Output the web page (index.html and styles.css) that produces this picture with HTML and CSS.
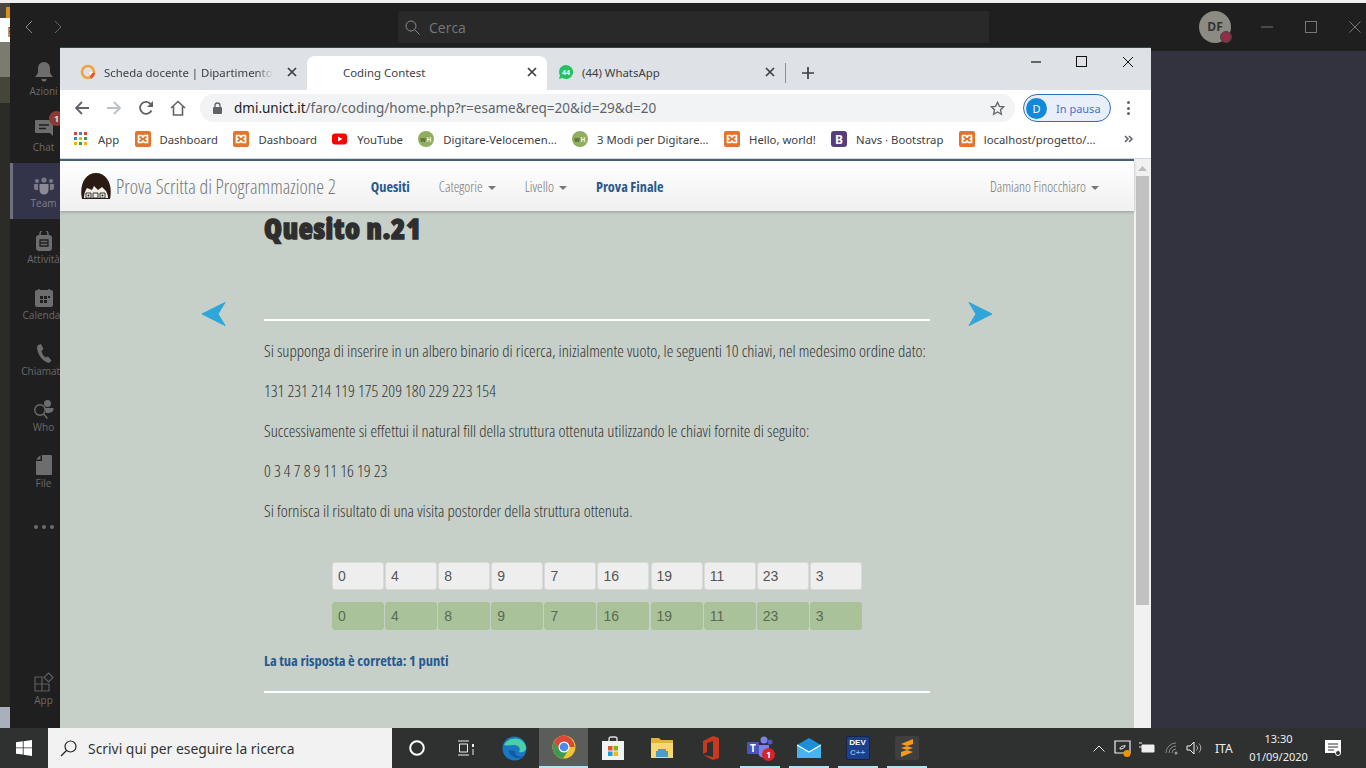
FILE: index.html
```html
<!DOCTYPE html>
<html lang="it">
<head>
    <meta charset="UTF-8">
    <title>Coding Contest</title>
    <link rel="stylesheet" href="styles.css">
</head>
<body>
<svg class="defs" width="0" height="0">
    <symbol id="xampp" viewBox="0 0 16 16">
        <rect width="16" height="16" rx="2" fill="#e4742c"/>
        <path d="M3.500 4.500h3.200l1.300 1.600 1.300-1.600h3.200v3l-1.500.5 1.500.5v3h-3.200L8 9.900l-1.300 1.600H3.500v-3L5 8l-1.500-.5z" fill="none" stroke="#fff" stroke-width="1.700" stroke-linejoin="round"/>
    </symbol>
    <symbol id="close" viewBox="0 0 10 10">
        <path d="M1 1l8 8M9 1l-8 8" stroke="#3c4043" stroke-width="1.700" fill="none"/>
    </symbol>
</svg>

<div class="backstrip">
    <div class="strip-a"></div>
    <div class="strip-b"></div>
    <div class="strip-c">F</div>
    <div class="strip-d"></div>
    <div class="strip-e"></div>
    <div class="strip-f"></div>
    <div class="strip-g"></div>
</div>

<!-- Teams, behind the browser -->
<div class="teams">
    <div class="teams-top">
        <div class="teams-nav">
            <svg width="10" height="14" viewBox="0 0 10 14"><path d="M8 1L2 7l6 6" stroke="#8a8a8a" fill="none"/></svg>
            <svg width="10" height="14" viewBox="0 0 10 14"><path d="M2 1l6 6-6 6" stroke="#666" fill="none"/></svg>
        </div>
        <div class="teams-search">
            <svg width="15" height="15" viewBox="0 0 15 15"><circle cx="6" cy="6" r="5" stroke="#8a8a8a" fill="none"/><path d="M9.500 9.500l5 5" stroke="#8a8a8a"/></svg>
            <span>Cerca</span>
        </div>
        <div class="avatar">DF<span class="avatar-dot"></span></div>
        <div class="teams-ctrl">
            <svg width="12" height="12" viewBox="0 0 12 12"><path d="M0 6h12" stroke="#777"/></svg>
            <svg width="12" height="12" viewBox="0 0 12 12"><rect x=".5" y=".5" width="11" height="11" stroke="#777" fill="none"/></svg>
            <svg width="12" height="12" viewBox="0 0 12 12"><path d="M.5.5l11 11M11.500.5l-11 11" stroke="#777" fill="none"/></svg>
        </div>
    </div>
    <div class="teams-body">
        <div class="rail">
            <div class="rail-item">
                <svg width="20" height="22" viewBox="0 0 20 22"><path d="M10 1c4 0 6 3 6 7v4l3 4H1l3-4V8c0-4 2-7 6-7z" fill="#6d6d6d"/><path d="M7.500 18h5a2.500 2.500 0 0 1-5 0z" fill="#6d6d6d"/></svg>
                <span>Azioni</span>
            </div>
            <div class="rail-item">
                <svg width="20" height="20" viewBox="0 0 20 20"><path d="M2 1h16a1 1 0 0 1 1 1v15l-3-3H2a1 1 0 0 1-1-1V2a1 1 0 0 1 1-1z" fill="#6d6d6d"/><path d="M5 6h10M5 9.500h7" stroke="#1f1f1f" stroke-width="1.400"/></svg>
                <span>Chat</span>
                <b class="rail-badge">1</b>
            </div>
            <div class="rail-item rail-active">
                <svg width="22" height="18" viewBox="0 0 22 18"><circle cx="11" cy="3" r="2.600" fill="#7a7a86"/><circle cx="4" cy="4" r="2" fill="#7a7a86"/><circle cx="18" cy="4" r="2" fill="#7a7a86"/><path d="M6.500 7h9v6a4.500 4.500 0 0 1-9 0z" fill="#8b8b97"/><path d="M1 7h4v6H3a2 2 0 0 1-2-2zM17 7h4v4a2 2 0 0 1-2 2h-2z" fill="#7a7a86"/></svg>
                <span>Team</span>
            </div>
            <div class="rail-item">
                <svg width="18" height="20" viewBox="0 0 18 20"><path d="M5 5V3a4 4 0 0 1 8 0v2" stroke="#6d6d6d" fill="none" stroke-width="1.500"/><rect x="1" y="4" width="16" height="16" rx="3" fill="#6d6d6d"/><path d="M5 9h8v6H5zM5 12h8" stroke="#1f1f1f" fill="none" stroke-width="1.300"/></svg>
                <span>Attività</span>
            </div>
            <div class="rail-item">
                <svg width="18" height="18" viewBox="0 0 18 18"><rect y="1" width="18" height="17" rx="2" fill="#6d6d6d"/><path d="M4 0v3M14 0v3" stroke="#6d6d6d" stroke-width="1.500"/><path d="M5 7h3v3H5zM9 7h3v3H9zM13 7h2v2h-2zM5 11h3v3H5zM9 11h3v3H9z" fill="#1f1f1f"/></svg>
                <span>Calendar</span>
            </div>
            <div class="rail-item">
                <svg width="16" height="19" viewBox="0 0 16 19"><path d="M2 1l3-1 2.500 5-2 2c.5 2.500 2 5 4 6.500l2.500-1 3.500 4-2.500 2.500C7 18 1 10 1 3z" fill="#6d6d6d"/></svg>
                <span>Chiamate</span>
            </div>
            <div class="rail-item">
                <svg width="21" height="19" viewBox="0 0 21 19"><circle cx="7" cy="10" r="5.200" stroke="#6d6d6d" stroke-width="1.400" fill="none"/><path d="M10.500 14l4 4.500" stroke="#6d6d6d" stroke-width="1.400"/><circle cx="14.500" cy="3.500" r="3.500" fill="#6d6d6d"/><path d="M11 8h9.500c.5 3-2 5-6 5h-1.500a6.500 6.500 0 0 0-2-5z" fill="#6d6d6d"/></svg>
                <span>Who</span>
            </div>
            <div class="rail-item">
                <svg width="16" height="20" viewBox="0 0 16 20"><path d="M6 0h9a1 1 0 0 1 1 1v18a1 1 0 0 1-1 1H1a1 1 0 0 1-1-1V6h6z" fill="#6d6d6d"/><path d="M0 4.500L4.500 0v4.500z" fill="#6d6d6d"/></svg>
                <span>File</span>
            </div>
            <div class="rail-more"><i></i><i></i><i></i></div>
            <div class="rail-item rail-apps">
                <svg width="20" height="20" viewBox="0 0 20 20"><path d="M1 5h7v7H1zM1 12h7v7H1zM8 12h7v7H8z" stroke="#5e5e5e" stroke-width="1.200" fill="none"/><path d="M14.500 1l4.500 4.500-4.500 4.500L10 5.500z" stroke="#5e5e5e" stroke-width="1.200" fill="none"/></svg>
                <span>App</span>
            </div>
        </div>
        <div class="teams-main"></div>
    </div>
</div>

<!-- Chrome window -->
<div class="chrome">
    <div class="tabstrip">
        <div class="tab tab-first">
            <svg class="favicon" width="16" height="16" viewBox="0 0 16 16"><circle cx="8" cy="8" r="6" fill="none" stroke="#f2a33a" stroke-width="2.600"/><path d="M8 8l7 1-1 3-3 3z" fill="#e8532b"/><path d="M8 8h5l-3 4z" fill="#fff"/></svg>
            <span class="tab-title tab-fade">Scheda docente | Dipartimento di</span>
            <svg class="tab-close" width="10" height="10"><use href="#close"/></svg>
        </div>
        <div class="tab tab-active">
            <span class="tab-title">Coding Contest</span>
            <svg class="tab-close" width="10" height="10"><use href="#close"/></svg>
        </div>
        <div class="tab tab-last">
            <svg class="favicon" width="16" height="16" viewBox="0 0 16 16"><path d="M8 1a7 7 0 1 1-3.500 13L1 15l1-3.500A7 7 0 0 1 8 1z" fill="#25c15f"/><text x="8" y="10.800" class="wa-count">44</text></svg>
            <span class="tab-title">(44) WhatsApp</span>
            <svg class="tab-close" width="10" height="10"><use href="#close"/></svg>
        </div>
        <div class="tab-sep"></div>
        <svg class="tab-plus" width="12" height="12" viewBox="0 0 12 12"><path d="M6 0v12M0 6h12" stroke="#3c4043" stroke-width="1.700"/></svg>
        <div class="win-ctrl">
            <svg width="12" height="12" viewBox="0 0 12 12"><path d="M1 6h10" stroke="#111" stroke-width="1.200"/></svg>
            <svg width="12" height="12" viewBox="0 0 12 12"><rect x=".5" y=".5" width="10" height="10" stroke="#111" fill="none"/></svg>
            <svg width="12" height="12" viewBox="0 0 12 12"><path d="M1 1l10 10M11 1L1 11" stroke="#111"/></svg>
        </div>
    </div>

    <div class="toolbar">
        <svg class="tb-btn" width="16" height="16" viewBox="0 0 16 16"><path d="M15 8H2M8 2L2 8l6 6" stroke="#5f6368" stroke-width="1.800" fill="none"/></svg>
        <svg class="tb-btn" width="16" height="16" viewBox="0 0 16 16"><path d="M1 8h13M8 2l6 6-6 6" stroke="#bdc1c6" stroke-width="1.800" fill="none"/></svg>
        <svg class="tb-btn" width="16" height="16" viewBox="0 0 16 16"><path d="M13.500 10.500A6 6 0 1 1 13 4.500" stroke="#5f6368" stroke-width="1.800" fill="none"/><path d="M15 1v6H9z" fill="#5f6368"/></svg>
        <svg class="tb-btn" width="16" height="16" viewBox="0 0 16 16"><path d="M1 8l7-6.500L15 8M3.500 6.500V15h9V6.500" stroke="#5f6368" stroke-width="1.600" fill="none"/></svg>
        <div class="omnibox">
            <svg width="10" height="12" viewBox="0 0 10 12"><rect y="5" width="9" height="7" rx="1" fill="#5f6368"/><path d="M2 5V3.500a2.500 2.500 0 0 1 5 0V5" stroke="#5f6368" stroke-width="1.300" fill="none"/></svg>
            <div class="url"><span class="url-host">dmi.unict.it</span>/faro/coding/home.php?r=esame&amp;req=20&amp;id=29&amp;d=20</div>
            <svg width="15" height="15" viewBox="0 0 15 15"><path d="M7.500 1.300l1.900 4 4.300.5-3.200 3 .9 4.400-3.900-2.200-3.900 2.200.9-4.400-3.200-3 4.300-.5z" stroke="#5f6368" stroke-width="1.300" fill="none"/></svg>
        </div>
        <div class="paused">
            <span class="paused-avatar">D</span>
            <span class="paused-text">In pausa</span>
        </div>
        <div class="kebab"><i></i><i></i><i></i></div>
    </div>

    <div class="bookmarks">
        <div class="bm bm-apps">
            <svg width="14" height="14" viewBox="0 0 14 14">
                <path d="M0 0h3v3H0z" fill="#d9453c"/><path d="M5 0h3v3H5z" fill="#3f7fe0"/><path d="M10 0h3v3h-3z" fill="#d9453c"/>
                <path d="M0 5h3v3H0z" fill="#3f7fe0"/><path d="M5 5h3v3H5z" fill="#f4b400"/><path d="M10 5h3v3h-3z" fill="#2fa350"/>
                <path d="M0 10h3v3H0z" fill="#f4b400"/><path d="M5 10h3v3H5z" fill="#2fa350"/><path d="M10 10h3v3h-3z" fill="#f4b400"/>
            </svg>
            <span>App</span>
        </div>
        <div class="bm"><svg width="16" height="16"><use href="#xampp"/></svg><span>Dashboard</span></div>
        <div class="bm"><svg width="16" height="16"><use href="#xampp"/></svg><span>Dashboard</span></div>
        <div class="bm"><svg width="16" height="16" viewBox="0 0 16 16"><rect y="2.500" width="15" height="11" rx="3" fill="#f00"/><path d="M6 5.500l4.500 2.500L6 10.500z" fill="#fff"/></svg><span>YouTube</span></div>
        <div class="bm"><svg width="16" height="16" viewBox="0 0 16 16"><circle cx="8" cy="8" r="8" fill="#8fae62"/><text x="5" y="10.500" class="wh-w">w</text><text x="11" y="10.500" class="wh-h">H</text></svg><span>Digitare-Velocemen...</span></div>
        <div class="bm"><svg width="16" height="16" viewBox="0 0 16 16"><circle cx="8" cy="8" r="8" fill="#8fae62"/><text x="5" y="10.500" class="wh-w">w</text><text x="11" y="10.500" class="wh-h">H</text></svg><span>3 Modi per Digitare...</span></div>
        <div class="bm"><svg width="16" height="16"><use href="#xampp"/></svg><span>Hello, world!</span></div>
        <div class="bm"><svg width="16" height="16" viewBox="0 0 16 16"><rect width="16" height="16" rx="3" fill="#563d7c"/><text x="8" y="12.500" class="bs-letter">B</text></svg><span>Navs · Bootstrap</span></div>
        <div class="bm"><svg width="16" height="16"><use href="#xampp"/></svg><span>localhost/progetto/...</span></div>
        <svg class="bm-more" width="10" height="8" viewBox="0 0 10 8"><path d="M1 1l3 3-3 3M5 1l3 3-3 3" stroke="#5f6368" stroke-width="1.500" fill="none"/></svg>
    </div>

    <div class="viewport">
        <div class="page">
            <nav class="navbar">
                <svg class="logo" width="32" height="26" viewBox="0 0 32 26">
                    <path d="M2 26C-1 12 5 0 16 0s17 12 14 26z" fill="#2b1a14"/>
                    <path d="M4 25c0-4 1-7 3-10l5 2 2-4 4 4 4-3 4 4c1 2 2 4 2 7z" fill="#f4ede6"/>
                    <path d="M6 20h5v5H6zM13 20h5v5h-5zM20 20h5v5h-5z" fill="none" stroke="#222" stroke-width=".9"/>
                    <circle cx="8.500" cy="22.500" r="1" fill="#222"/><circle cx="22.500" cy="22.500" r="1" fill="#222"/>
                </svg>
                <span class="brand">Prova Scritta di Programmazione 2</span>
                <a class="nav-link nav-strong nav-first">Quesiti</a>
                <a class="nav-link nav-drop nav-cat">Categorie</a>
                <a class="nav-link nav-drop nav-lvl">Livello</a>
                <a class="nav-link nav-strong nav-final">Prova Finale</a>
                <a class="nav-link nav-drop nav-user">Damiano Finocchiaro</a>
            </nav>

            <div class="content">
                <svg class="arrow arrow-left" width="26" height="26" viewBox="0 0 26 26"><path d="M1 13L24 1.500 17 13l7 11.500z" fill="#2ea6da" stroke="#2ea6da" stroke-linejoin="round"/></svg>
                <svg class="arrow arrow-right" width="26" height="26" viewBox="0 0 26 26"><path d="M25 13L2 1.500 9 13 2 24.500z" fill="#2ea6da" stroke="#2ea6da" stroke-linejoin="round"/></svg>

                <h1>Quesito n.21</h1>
                <hr class="rule rule-top">
                <p>Si supponga di inserire in un albero binario di ricerca, inizialmente vuoto, le seguenti 10 chiavi, nel medesimo ordine dato:</p>
                <p>131 231 214 119 175 209 180 229 223 154</p>
                <p>Successivamente si effettui il natural fill della struttura ottenuta utilizzando le chiavi fornite di seguito:</p>
                <p>0 3 4 7 8 9 11 16 19 23</p>
                <p>Si fornisca il risultato di una visita postorder della struttura ottenuta.</p>

                <div class="cells cells-answer">
                    <div class="cell">0</div><div class="cell">4</div><div class="cell">8</div><div class="cell">9</div><div class="cell">7</div><div class="cell">16</div><div class="cell">19</div><div class="cell">11</div><div class="cell">23</div><div class="cell">3</div>
                </div>
                <div class="cells cells-ok">
                    <div class="cell">0</div><div class="cell">4</div><div class="cell">8</div><div class="cell">9</div><div class="cell">7</div><div class="cell">16</div><div class="cell">19</div><div class="cell">11</div><div class="cell">23</div><div class="cell">3</div>
                </div>
                <div class="result">La tua risposta è corretta: 1 punti</div>
                <hr class="rule rule-bottom">
            </div>
        </div>
        <div class="scrollbar">
            <svg width="9" height="5" viewBox="0 0 9 5"><path d="M4.500 0L9 5H0z" fill="#bdbdbd"/></svg>
            <div class="scroll-thumb"></div>
        </div>
    </div>
</div>

<!-- Windows taskbar -->
<div class="taskbar">
    <div class="start">
        <svg width="16" height="16" viewBox="0 0 16 16"><path d="M0 2.300l6.800-1v6.200H0zM7.600 1.200L16 0v7.500H7.600zM0 8.300h6.800v6.300L0 13.700zM7.600 8.300H16V16l-8.400-1.200z" fill="#fff"/></svg>
    </div>
    <div class="search">
        <svg width="17" height="17" viewBox="0 0 17 17"><circle cx="10.500" cy="6.500" r="5.500" stroke="#222" stroke-width="1.200" fill="none"/><path d="M6.500 10.500L1 16" stroke="#222" stroke-width="1.200"/></svg>
        <span>Scrivi qui per eseguire la ricerca</span>
    </div>
    <div class="task-icons">
        <div class="task"><svg width="16" height="16" viewBox="0 0 16 16"><circle cx="8" cy="8" r="6.800" stroke="#fff" stroke-width="2" fill="none"/></svg></div>
        <div class="task"><svg width="18" height="16" viewBox="0 0 18 16"><path d="M1 1h11M1 15h11M2.500 4h8v8h-8z" stroke="#eee" fill="none"/><path d="M15 4h2v3h-2z" fill="#eee"/><path d="M16 9v6" stroke="#eee"/></svg></div>
        <div class="task">
            <svg width="25" height="25" viewBox="0 0 25 25"><circle cx="12.500" cy="12.500" r="12" fill="#1a78c2"/><path d="M2 9C5 1 21-1 24 11c.5 4-3 6-7 5 2-3 0-7-5-7-4 0-7 1-10 0z" fill="#4ad0a8"/><path d="M7 14c0 5 5 9 11 8 2 0 3-1 4-2-6 2-9-1-9-5z" fill="#0f5ca8"/></svg>
        </div>
        <div class="task task-on">
            <svg width="24" height="24" viewBox="0 0 24 24"><circle cx="12" cy="12" r="11.500" fill="#f4c430"/><path d="M12 .5A11.500 11.500 0 0 0 2 6.500l5 9 5-3.500h10.500A11.500 11.500 0 0 0 12 .5z" fill="#d9483b"/><path d="M2 6.500A11.500 11.500 0 0 0 11 23.500l4.500-7L7 15z" fill="#3b9a4f"/><circle cx="12" cy="12" r="5.500" fill="#fff"/><circle cx="12" cy="12" r="4.300" fill="#4a8bf0"/></svg>
        </div>
        <div class="task"><svg width="24" height="24" viewBox="0 0 24 24"><path d="M8 6V3a2 2 0 0 1 2-2h4a2 2 0 0 1 2 2v3" stroke="#ddd" stroke-width="1.400" fill="none"/><path d="M1 5h22v19H1z" fill="#f2f2f2"/><path d="M7 10h4.500v4.500H7z" fill="#e8532b"/><path d="M12.500 10H17v4.500h-4.500z" fill="#7fba00"/><path d="M7 15.500h4.500V20H7z" fill="#1b9de2"/><path d="M12.500 15.500H17V20h-4.500z" fill="#fbb900"/></svg></div>
        <div class="task"><svg width="22" height="20" viewBox="0 0 22 20"><path d="M0 0h8l2 2h12v18H0z" fill="#e3b13e"/><path d="M0 5h22v15H0z" fill="#f8d775"/><path d="M7 11h8v2h2v6H5v-6h2z" fill="#4a9bd4"/></svg></div>
        <div class="task"><svg width="18" height="24" viewBox="0 0 18 24"><path d="M1 5l10-5 6 2v20l-6 2-10-5 10 2V5L5 7v9l-4 2z" fill="#c9381f"/></svg></div>
        <div class="task task-open">
            <svg width="26" height="24" viewBox="0 0 26 24"><circle cx="17" cy="4" r="3.500" fill="#7b83eb"/><circle cx="23" cy="6" r="2.500" fill="#5059c9"/><path d="M11 9h11v7a5.500 5.500 0 0 1-11 0z" fill="#7b83eb"/><rect y="6" width="12" height="12" rx="1" fill="#4b53bc"/><text x="6" y="15.500" class="teams-t">T</text></svg>
            <b class="task-badge">1</b>
        </div>
        <div class="task task-open"><svg width="24" height="20" viewBox="0 0 24 20"><path d="M0 7L12 0l12 7v13H0z" fill="#1b8fd8"/><path d="M0 7l12 7 12-7v13H0z" fill="#45b4ef"/><path d="M0 7l12 7 12-7" stroke="#fff" stroke-width="1.200" fill="none"/></svg></div>
        <div class="task task-open"><div class="devcpp"><span>DEV</span><span class="devcpp-low">C++</span></div></div>
        <div class="task task-open"><div class="sublime"><svg width="12" height="18" viewBox="0 0 12 18"><path d="M12 0v5L0 9V5zM0 9l12 4v-4L0 5zM12 9v4L0 18v-5z" fill="#f49b1c"/></svg></div></div>
    </div>
    <div class="tray">
        <svg width="12" height="7" viewBox="0 0 12 7"><path d="M.5 6.500L6 1l5.500 5.500" stroke="#eee" fill="none"/></svg>
        <svg class="tray-app" width="18" height="18" viewBox="0 0 18 18"><path d="M1 2h15v12H1z" stroke="#eee" stroke-width="1.200" fill="none"/><path d="M6 10c0-3 3-3 5-3M11 6c0 3-2 4-5 4" stroke="#eee" fill="none"/><circle cx="13" cy="14.500" r="3.500" fill="#f39200"/></svg>
        <svg class="tray-bat" width="16" height="12" viewBox="0 0 16 12"><path d="M3 3h12v7H3z" stroke="#eee" fill="#eee"/><path d="M0 1h3M0 5h3" stroke="#eee"/></svg>
        <svg class="tray-wifi" width="16" height="14" viewBox="0 0 16 14"><circle cx="12" cy="12" r="1.500" fill="#999"/><path d="M8 12a4 4 0 0 1 4-4M5 12a7 7 0 0 1 7-7M2 12a10 10 0 0 1 10-10" stroke="#888" fill="none"/></svg>
        <svg class="tray-vol" width="17" height="14" viewBox="0 0 17 14"><path d="M1 5h3l4-4v12l-4-4H1z" stroke="#eee" fill="none"/><path d="M10.500 4.500a3.500 3.500 0 0 1 0 5M13 2.500a6.500 6.500 0 0 1 0 9" stroke="#aaa" fill="none"/></svg>
        <span class="tray-lang">ITA</span>
        <div class="clock"><span>13:30</span><span>01/09/2020</span></div>
        <svg class="tray-note" width="17" height="16" viewBox="0 0 17 16"><path d="M0 0h16v13H0z" fill="#fff"/><path d="M3 4h10M3 7h10M3 10h6" stroke="#2e3130"/><circle cx="13" cy="13" r="2.500" fill="#2e3130" stroke="#fff"/></svg>
    </div>
</div>
</body>
</html>
```

FILE: styles.css
```css
* {
    box-sizing: border-box;
}

html, body {
    margin: 0;
    padding: 0;
}

body {
    position: relative;
    width: 1366px;
    height: 768px;
    overflow: hidden;
    background-color: #eee;
    font-family: "Open Sans", "Noto Sans", sans-serif;
}

.defs {
    position: absolute;
}

/* window left behind Teams */
.backstrip {
    position: absolute;
    left: 0;
    top: 0;
    width: 10px;
    height: 728px;
    display: flex;
    flex-direction: column;
}

.strip-a { height: 3px; background-color: #eee; }
.strip-b { height: 15px; background-color: #d9901e; border-left: 6px solid #4a4540; border-top: 4px solid #4a4540; }
.strip-c { height: 24px; background-color: #fff; color: #555; font-size: 14px; line-height: 28px; padding-left: 7px; overflow: hidden; }
.strip-d { height: 35px; background-color: #7b7b72; }
.strip-e { height: 26px; background-color: #45453a; }
.strip-f { flex: 1; background-color: #2b2b27; }
.strip-g { height: 21px; background-color: #a9b0bc; }

/* Teams */
.teams {
    position: absolute;
    left: 10px;
    top: 3px;
    width: 1356px;
    height: 725px;
    display: flex;
    flex-direction: column;
    background-color: #1f1f1f;
}

.teams-top {
    height: 48px;
    display: flex;
    align-items: center;
    flex-shrink: 0;
}

.teams-nav {
    display: flex;
    gap: 19px;
    margin-left: 14px;
    width: 374px;
}

.teams-search {
    width: 591px;
    height: 32px;
    background-color: #292929;
    border-radius: 2px;
    display: flex;
    align-items: center;
    gap: 9px;
    padding-left: 7px;
    color: #777;
    font-size: 14px;
}

.avatar {
    position: relative;
    width: 32px;
    height: 32px;
    margin-left: 210px;
    border-radius: 50%;
    background-color: #8b8b84;
    color: #333;
    font-size: 12px;
    font-weight: 700;
    text-align: center;
    line-height: 32px;
}

.avatar-dot {
    position: absolute;
    right: -1px;
    bottom: 0;
    width: 12px;
    height: 12px;
    border-radius: 50%;
    background-color: #8e2f45;
    border: 1px solid #444;
}

.teams-ctrl {
    display: flex;
    gap: 32px;
    margin-left: 30px;
}

.teams-body {
    flex: 1;
    display: flex;
    min-height: 0;
}

.rail {
    width: 67px;
    display: flex;
    flex-direction: column;
    flex-shrink: 0;
}

.rail-item {
    position: relative;
    height: 56px;
    display: flex;
    flex-direction: column;
    align-items: center;
    justify-content: flex-end;
    gap: 2px;
    padding-bottom: 10px;
    color: #6a6a6a;
    font-size: 10px;
    line-height: 12px;
    white-space: nowrap;
    flex-shrink: 0;
}

.rail-active {
    background-color: #33344a;
    border-left: 3px solid #6f6f80;
    padding-right: 3px;
    color: #80808c;
}

.rail-badge {
    position: absolute;
    left: 39px;
    top: 4px;
    width: 15px;
    height: 15px;
    border-radius: 50%;
    background-color: #8e3a32;
    color: #ddd;
    font-size: 9px;
    text-align: center;
    line-height: 15px;
}

.rail-more {
    height: 56px;
    display: flex;
    align-items: center;
    justify-content: center;
    gap: 4px;
    flex-shrink: 0;
}

.rail-more i {
    width: 4px;
    height: 4px;
    border-radius: 50%;
    background-color: #6d6d6d;
}

.rail-apps {
    margin-top: 105px;
}

.teams-main {
    flex: 1;
    background-color: #33323f;
}

/* Chrome */
.chrome {
    position: absolute;
    left: 60px;
    top: 47px;
    width: 1091px;
    height: 681px;
    display: flex;
    flex-direction: column;
    background-color: #fff;
    border-top: 1px solid #2c4a4a;
    overflow: hidden;
    font-family: "Noto Sans", "Open Sans", sans-serif;
}

.tabstrip {
    height: 42px;
    flex-shrink: 0;
    background-color: #dee1e6;
    display: flex;
    align-items: flex-end;
    padding-left: 8px;
    color: #3c4043;
    font-size: 11.400px;
}

.tab {
    height: 34px;
    display: flex;
    align-items: center;
    flex-shrink: 0;
    padding-bottom: 2px;
}

.tab-first {
    width: 239px;
    padding-left: 12px;
    gap: 8px;
}

.tab-active {
    width: 240px;
    background-color: #fff;
    border-radius: 8px 8px 0 0;
    padding-left: 36px;
}

.tab-last {
    width: 238px;
    padding-left: 11px;
    gap: 8px;
}

.tab-title {
    flex: 1;
    white-space: nowrap;
    overflow: hidden;
}

.tab-fade {
    -webkit-mask-image: linear-gradient(to right, #000 90%, transparent);
    mask-image: linear-gradient(to right, #000 90%, transparent);
}

.tab-close {
    margin-right: 10px;
    flex-shrink: 0;
}

.tab-first .tab-close {
    margin-left: 6px;
}

.wa-count {
    fill: #fff;
    font-size: 7px;
    font-weight: 700;
    text-anchor: middle;
    font-family: "Noto Sans", sans-serif;
}

.tab-sep {
    width: 1px;
    height: 20px;
    background-color: #8e9196;
    margin-bottom: 7px;
}

.tab-plus {
    margin-left: 16px;
    margin-bottom: 11px;
}

.win-ctrl {
    margin-left: auto;
    display: flex;
    gap: 34px;
    align-self: flex-start;
    margin-top: 8px;
    margin-right: 17px;
}

.toolbar {
    height: 32px;
    flex-shrink: 0;
    display: flex;
    align-items: center;
    padding-left: 14px;
}

.tb-btn {
    margin-top: 4px;
    margin-right: 16px;
}

.tb-btn:nth-child(4) {
    margin-right: 14px;
}

.omnibox {
    width: 815px;
    height: 28px;
    margin-top: 4px;
    border-radius: 14px;
    background-color: #f1f3f4;
    display: flex;
    align-items: center;
    padding: 0 10px 0 13px;
    gap: 11px;
}

.url {
    flex: 1;
    font-size: 13.500px;
    color: #5f6368;
    white-space: nowrap;
}

.url-host {
    color: #202124;
}

.paused {
    width: 88px;
    height: 28px;
    margin: 4px 0 0 8px;
    border-radius: 14px;
    border: 1px solid #2f6db5;
    background-color: #e9effa;
    display: flex;
    align-items: center;
    padding-left: 2px;
    gap: 9px;
}

.paused-avatar {
    width: 21px;
    height: 21px;
    border-radius: 50%;
    background-color: #0f89d8;
    color: #fff;
    font-size: 11px;
    text-align: center;
    line-height: 21px;
}

.paused-text {
    font-size: 11px;
    color: #4a6fd0;
    white-space: nowrap;
}

.kebab {
    display: flex;
    flex-direction: column;
    gap: 2.500px;
    margin: 4px 0 0 16px;
}

.kebab i {
    width: 3px;
    height: 3px;
    border-radius: 50%;
    background-color: #5f6368;
}

.bookmarks {
    height: 37px;
    flex-shrink: 0;
    display: flex;
    align-items: center;
    padding-left: 14px;
    padding-bottom: 2px;
    gap: 15.400px;
    font-size: 11.300px;
    color: #3c4043;
    border-bottom: 1px solid #cfd8e0;
}

.bm {
    display: flex;
    align-items: center;
    gap: 9px;
    white-space: nowrap;
}

.bm-apps {
    gap: 10px;
}

.bm-more {
    margin-left: 13px;
}

.bs-letter {
    fill: #fff;
    font-size: 12px;
    font-weight: 700;
    text-anchor: middle;
    font-family: "Noto Sans", sans-serif;
}

.wh-w, .wh-h {
    font-size: 6.500px;
    font-weight: 700;
    text-anchor: middle;
    font-family: "Noto Sans", sans-serif;
}

.wh-w { fill: #4d6330; }
.wh-h { fill: #eef3e2; }

.viewport {
    flex: 1;
    display: flex;
    min-height: 0;
}

.page {
    width: 1074px;
    flex-shrink: 0;
    background-color: #c6cfc8;
    border-top: 2px solid #4d6278;
    font-family: "Open Sans", "Noto Sans", sans-serif;
    font-stretch: 75%;
}

.navbar {
    height: 50px;
    display: flex;
    align-items: center;
    background-image: linear-gradient(to bottom, #fff, #f0f0f0);
    box-shadow: 0 1px 3px rgba(0, 0, 0, 0.25);
    padding-left: 20px;
    position: relative;
}

.logo {
    margin-right: 4px;
    flex-shrink: 0;
}

.brand {
    font-size: 19.800px;
    font-weight: 300;
    color: #777;
    white-space: nowrap;
}

.nav-link {
    font-size: 14.300px;
    color: #777;
    font-weight: 300;
    white-space: nowrap;
}

.nav-strong {
    font-weight: 700;
    color: #27598f;
}

.nav-drop::after {
    content: "";
    display: inline-block;
    margin-left: 5px;
    vertical-align: 2px;
    border-top: 4px solid #777;
    border-left: 4px solid transparent;
    border-right: 4px solid transparent;
}

.nav-first { margin-left: 35px; }
.nav-cat { margin-left: 29px; }
.nav-lvl { margin-left: 29px; }
.nav-final { margin-left: 29px; }
.nav-user { margin-left: auto; margin-right: 35px; font-size: 14px; }

.content {
    position: relative;
    padding: 0 204px;
    color: #333;
}

.arrow {
    position: absolute;
    top: 90px;
}

.arrow-left { left: 141px; }
.arrow-right { left: 907px; }

h1 {
    margin: 0;
    height: 108px;
    font-size: 29px;
    line-height: 34px;
    font-weight: 800;
    letter-spacing: .7px;
    color: #2e2e2e;
    -webkit-text-stroke: 1.400px #2e2e2e;
}

.rule {
    margin: 0;
    border: 0;
    height: 2px;
    background-color: #fff;
}

.content p {
    margin: 0 0 20px;
    font-size: 16.700px;
    line-height: 20px;
    font-weight: 300;
    white-space: nowrap;
}

.rule-top {
    margin-bottom: 20px;
}

.cells {
    display: flex;
    gap: 1.100px;
    margin-left: 68px;
    font-family: "Liberation Sans", Arial, sans-serif;
    font-stretch: normal;
}

.cells-answer {
    margin-top: 41px;
}

.cells-ok {
    margin-top: 12px;
}

.cell {
    width: 52px;
    height: 28px;
    padding-left: 5px;
    border-radius: 3px;
    border: 1px solid #d9dcd9;
    background-color: #eee;
    color: #555;
    font-size: 14px;
    line-height: 26px;
}

.cells-ok .cell {
    background-color: #a9c299;
    border-color: #a9c299;
    color: #5a6b53;
}

.result {
    margin-top: 21px;
    font-size: 14.500px;
    line-height: 20px;
    font-weight: 700;
    color: #27598f;
}

.rule-bottom {
    margin-top: 20px;
}

.scrollbar {
    flex: 1;
    background-color: #f1f1f1;
    display: flex;
    flex-direction: column;
    align-items: center;
    padding-top: 7px;
}

.scroll-thumb {
    width: 13px;
    height: 429px;
    margin-top: 5px;
    background-color: #c1c1c1;
}

/* Taskbar */
.taskbar {
    position: absolute;
    left: 0;
    top: 728px;
    width: 1366px;
    height: 40px;
    display: flex;
    background-color: #2e3130;
    color: #eee;
}

.start {
    width: 48px;
    display: flex;
    align-items: center;
    justify-content: center;
}

.search {
    width: 344px;
    background-color: #f2f2f2;
    display: flex;
    align-items: center;
    gap: 11px;
    padding-left: 12px;
    color: #333;
    font-size: 13.900px;
    font-family: "Noto Sans", "Open Sans", sans-serif;
}

.task-icons {
    display: flex;
}

.task {
    position: relative;
    width: 49px;
    display: flex;
    align-items: center;
    justify-content: center;
}

.task-on {
    background-color: #5b5d5b;
    border-bottom: 2px solid #aee6f7;
}

.task-open::after {
    content: "";
    position: absolute;
    left: 5px;
    right: 4px;
    bottom: 0;
    height: 2px;
    background-color: #aee6f7;
}

.teams-t {
    fill: #fff;
    font-size: 10px;
    font-weight: 700;
    text-anchor: middle;
    font-family: "Noto Sans", sans-serif;
}

.task-badge {
    position: absolute;
    left: 27px;
    top: 20px;
    width: 13px;
    height: 13px;
    border-radius: 50%;
    background-color: #d8232a;
    color: #fff;
    font-size: 9px;
    text-align: center;
    line-height: 13px;
    font-family: "Noto Sans", sans-serif;
}

.devcpp {
    width: 24px;
    height: 24px;
    background-color: #1d3f8c;
    border: 1px solid #14244a;
    border-radius: 2px;
    display: flex;
    flex-direction: column;
    align-items: center;
    font-family: "Liberation Sans", sans-serif;
    font-size: 8px;
    font-weight: 700;
    line-height: 10px;
    color: #fff;
    padding-top: 1px;
}

.devcpp-low {
    color: #7fb4ea;
}

.sublime {
    width: 24px;
    height: 24px;
    border-radius: 2px;
    background-color: #3f3f3f;
    display: flex;
    align-items: center;
    justify-content: center;
}

.tray {
    flex: 1;
    display: flex;
    align-items: center;
    padding-left: 162px;
    font-family: "Noto Sans", "Open Sans", sans-serif;
    font-size: 12px;
}

.tray svg {
    flex-shrink: 0;
}

.tray-app { margin-left: 9px; }
.tray-bat { margin-left: 7px; }
.tray-wifi { margin-left: 9px; }
.tray-vol { margin-left: 6px; }
.tray-lang { margin-left: 12px; }

.clock {
    width: 80px;
    flex-shrink: 0;
    margin-left: 6px;
    display: flex;
    flex-direction: column;
    align-items: center;
    font-size: 11px;
    line-height: 18px;
}

.tray-note {
    margin-left: 6px;
}
```
